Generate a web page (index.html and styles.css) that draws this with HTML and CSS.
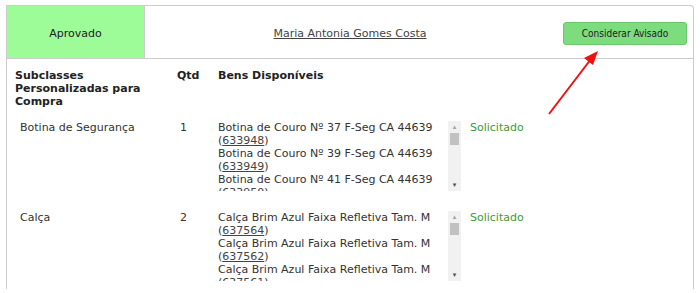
FILE: index.html
```html
<!DOCTYPE html>
<html lang="pt-BR">
<head>
    <meta charset="UTF-8">
    <title>Subclasses Personalizadas</title>
    <link rel="stylesheet" href="styles.css">
</head>
<body>
    <div class="panel">
        <div class="status-bar">
            <div class="status">Aprovado</div>
            <div class="person"><a href="#">Maria Antonia Gomes Costa</a></div>
            <div class="action"><button class="btn-aviso">Considerar Avisado</button></div>
        </div>

        <div class="items">
            <div class="row head">
                <div class="col-sub">Subclasses Personalizadas para Compra</div>
                <div class="col-qtd">Qtd</div>
                <div class="col-bens">Bens Disponíveis</div>
                <div class="col-sit"></div>
            </div>

            <div class="row">
                <div class="col-sub cell">Botina de Segurança</div>
                <div class="col-qtd cell">1</div>
                <div class="col-bens">
                    <div class="bens-box">
                        <div class="bens-list">
                            Botina de Couro Nº 37 F-Seg CA 44639 (<a href="#">633948</a>)<br>
                            Botina de Couro Nº 39 F-Seg CA 44639 (<a href="#">633949</a>)<br>
                            Botina de Couro Nº 41 F-Seg CA 44639 (<a href="#">633950</a>)
                        </div>
                        <div class="scroll"><span class="arrow">▴</span><span class="thumb"></span><span class="fill"></span><span class="arrow">▾</span></div>
                    </div>
                </div>
                <div class="col-sit solicitado">Solicitado</div>
            </div>

            <div class="row">
                <div class="col-sub cell">Calça</div>
                <div class="col-qtd cell">2</div>
                <div class="col-bens">
                    <div class="bens-box">
                        <div class="bens-list">
                            Calça Brim Azul Faixa Refletiva Tam. M (<a href="#">637564</a>)<br>
                            Calça Brim Azul Faixa Refletiva Tam. M (<a href="#">637562</a>)<br>
                            Calça Brim Azul Faixa Refletiva Tam. M (<a href="#">637561</a>)
                        </div>
                        <div class="scroll"><span class="arrow">▴</span><span class="thumb"></span><span class="fill"></span><span class="arrow">▾</span></div>
                    </div>
                </div>
                <div class="col-sit solicitado">Solicitado</div>
            </div>
        </div>

        <!-- seta vermelha apontando para o botão -->
        <svg class="pointer" width="80" height="80" viewBox="0 0 80 80">
            <line x1="8" y1="72" x2="50" y2="17" stroke="#f01010" stroke-width="2"/>
            <polygon points="57,9 43,16 52,23" fill="#f01010"/>
        </svg>
    </div>
</body>
</html>
```

FILE: styles.css
```css
body {
    margin: 0;
    padding: 0;
    font-family: "DejaVu Sans", Verdana, sans-serif;
    font-size: 11px;
    color: #333;
    background: #fff;
}

a {
    color: #444;
}

.panel {
    position: relative;
    margin: 5px 0 0 6px;
    width: 686px;
    height: 283px;
    border: 1px solid #ccc;
    border-bottom: none;
    border-top-right-radius: 4px;
    overflow: hidden;
}

.status-bar {
    display: flex;
    height: 52px;
    border-bottom: 1px solid #ccc;
}

.status-bar > div {
    padding-top: 2px;
}

.status {
    width: 137px;
    background-color: #9dfb98;
    border-right: 1px solid #ccc;
    display: flex;
    align-items: center;
    justify-content: center;
    color: #222;
}

.person {
    width: 410px;
    display: flex;
    align-items: center;
    justify-content: center;
}

.action {
    flex: 1;
    display: flex;
    align-items: center;
    justify-content: center;
}

.btn-aviso {
    width: 124px;
    height: 23px;
    background-color: #7ddc7d;
    border: 1px solid #6cc76c;
    border-radius: 3px;
    font-family: "DejaVu Sans Condensed", "DejaVu Sans", sans-serif;
    font-size: 10px;
    color: #222;
    padding: 0;
    margin-left: 2px;
}

.items {
    padding: 10px 0 0 8px;
}

.row {
    display: flex;
    line-height: 13px;
    margin-bottom: 20px;
}

.row.head {
    font-weight: bold;
    color: #222;
    margin-bottom: 13px;
}

.col-sub {
    width: 162px;
}

.col-qtd {
    width: 41px;
}

.col-bens {
    width: 244px;
}

.col-sit {
    padding-left: 8px;
}

.head .col-sub {
    width: 150px;
    margin-right: 12px;
}

.col-sub.cell {
    padding-left: 5px;
    width: 157px;
}

.col-qtd.cell {
    padding-left: 3px;
    width: 38px;
}

.solicitado {
    color: #3f9b2f;
}

.bens-box {
    display: flex;
    height: 70px;
}

.bens-list {
    width: 230px;
    height: 70px;
    overflow: hidden;
}

.scroll {
    width: 13px;
    height: 70px;
    background: #f1f1f1;
    display: flex;
    flex-direction: column;
    align-items: center;
}

.scroll .arrow {
    font-size: 7px;
    line-height: 12px;
    height: 12px;
    color: #a3a3a3;
}

.scroll .arrow:last-child {
    color: #505050;
}

.scroll .thumb {
    width: 9px;
    height: 12px;
    background: #c1c1c1;
}

.scroll .fill {
    flex: 1;
}

.pointer {
    position: absolute;
    left: 534px;
    top: 36px;
}
```
